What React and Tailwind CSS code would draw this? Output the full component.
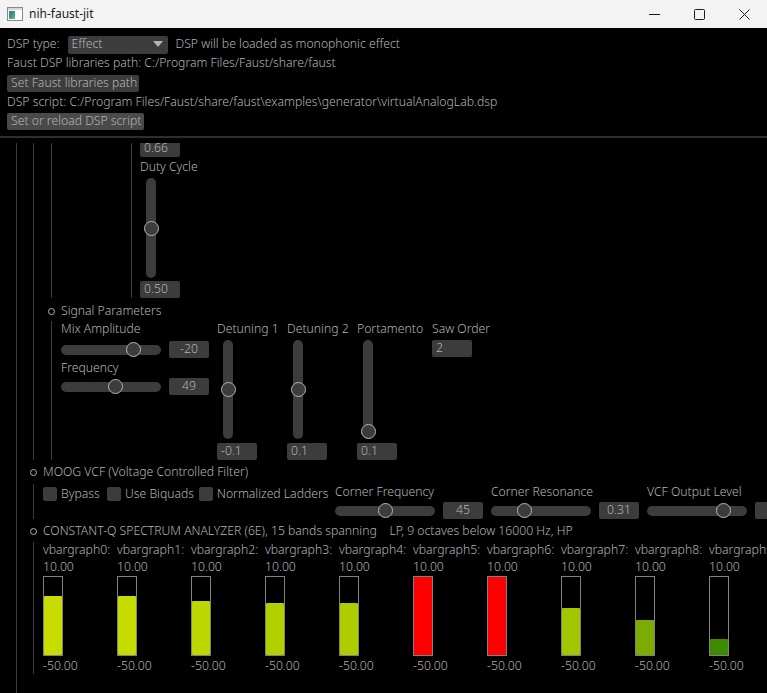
import React from 'react';

const txt = 'text-[#b4b4b4]';

const Bullet = () => (
  <span className="block w-[7px] h-[7px] rounded-full border border-[#b4b4b4] shrink-0" />
);

const ValueBox = ({ value, center = false, w = 'w-[40px]' }) => (
  <div
    className={`${w} h-[17px] rounded-[2px] bg-[#3c3c3c] flex items-center px-[4px] shrink-0 ${center ? 'justify-center' : 'justify-start'}`}
  >
    {value}
  </div>
);

const HSlider = ({ pos }) => (
  <div className="relative w-[100px] h-[17px] flex items-center shrink-0">
    <div className="w-full h-[10px] rounded-full bg-[#3c3c3c]" />
    <div
      className="absolute top-[1px] w-[15px] h-[15px] rounded-full border border-[#b4b4b4] bg-[#3c3c3c]"
      style={{ left: pos - 7.5 }}
    />
  </div>
);

const VSlider = ({ pos, h = 99 }) => (
  <div className="relative w-[15px] flex justify-center shrink-0 ml-[1.5px]" style={{ height: h }}>
    <div className="w-[10px] h-full rounded-full bg-[#3c3c3c]" />
    <div
      className="absolute left-0 w-[15px] h-[15px] rounded-full border border-[#b4b4b4] bg-[#3c3c3c]"
      style={{ top: pos - 7.5 }}
    />
  </div>
);

const Label = ({ children, className = '' }) => (
  <div className={`h-[16px] leading-[16px] whitespace-nowrap ${className}`}>{children}</div>
);

const VGroup = ({ label, pos, value, width }) => (
  <div className="flex flex-col items-start shrink-0" style={{ width }}>
    <Label>{label}</Label>
    <div className="mt-[3px] ml-[2px]">
      <VSlider pos={pos} />
    </div>
    <div className="mt-[4px]">
      <ValueBox value={value} />
    </div>
  </div>
);

const HGroup = ({ label, pos, value }) => (
  <div className="flex flex-col w-[156px] shrink-0">
    <Label>{label}</Label>
    <div className="flex items-center gap-[8px] mt-[2px]">
      <HSlider pos={pos} />
      <ValueBox value={value} center />
    </div>
  </div>
);

const Check = ({ label, width }) => (
  <div className="flex items-center h-[20px] gap-[4px] shrink-0" style={{ width }}>
    <span className="block w-[14px] h-[14px] rounded-[2px] bg-[#3c3c3c]" />
    <span className="whitespace-nowrap">{label}</span>
  </div>
);

const bars = [
  { top: 19, color: '#c8dc00' },
  { top: 19, color: '#c6dc00' },
  { top: 24, color: '#bcd600' },
  { top: 26, color: '#b2d000' },
  { top: 26, color: '#aecc00' },
  { top: 0, color: '#ff0000' },
  { top: 0, color: '#ff0000' },
  { top: 31, color: '#a2c600' },
  { top: 43, color: '#7cac00' },
  { top: 62, color: '#3e8a00' },
];

const Bar = ({ top, color }) => (
  <div className="w-[20px] h-[80px] border border-[#808080] flex flex-col justify-end">
    <div className="w-full rounded-[1px]" style={{ height: 78 - top, background: color }} />
  </div>
);

const Header = ({ children }) => (
  <div className="flex items-center h-[16px]">
    <Bullet />
    <span className="ml-[6px] whitespace-nowrap">{children}</span>
  </div>
);

export default function App() {
  return (
    <div className="w-[767px] h-[693px] overflow-hidden bg-black flex flex-col font-['Noto_Sans',sans-serif] text-[12.2px]">
      {/* title bar */}
      <div className="h-[28px] bg-[#f3f3f3] flex items-center shrink-0">
        <svg width="16" height="14" viewBox="0 0 16 14" className="ml-[7px]">
          <rect x="0.5" y="0.5" width="15" height="13" fill="#fdfdfd" stroke="#8a8a8a" />
          <rect x="1" y="1" width="14" height="2" fill="#d8d8d8" />
          <defs>
            <linearGradient id="g" x1="0" y1="0" x2="1" y2="1">
              <stop offset="0" stopColor="#2f6fb3" />
              <stop offset="0.6" stopColor="#3aa37a" />
              <stop offset="1" stopColor="#8cc152" />
            </linearGradient>
          </defs>
          <rect x="2" y="4" width="6" height="8" fill="url(#g)" />
        </svg>
        <span className="ml-[6px] text-[12px] text-[#1b1b1b]">nih-faust-jit</span>
        <div className="ml-auto flex h-full">
          <div className="w-[45px] h-full flex items-center justify-center">
            <svg width="11" height="11" viewBox="0 0 11 11">
              <line x1="0" y1="5.5" x2="11" y2="5.5" stroke="#1b1b1b" strokeWidth="1" />
            </svg>
          </div>
          <div className="w-[45px] h-full flex items-center justify-center">
            <svg width="11" height="11" viewBox="0 0 11 11">
              <rect x="0.5" y="0.5" width="10" height="10" rx="1" fill="none" stroke="#1b1b1b" strokeWidth="1" />
            </svg>
          </div>
          <div className="w-[45px] h-full flex items-center justify-center">
            <svg width="11" height="11" viewBox="0 0 11 11">
              <path d="M0.5 0.5 L10.5 10.5 M10.5 0.5 L0.5 10.5" stroke="#1b1b1b" strokeWidth="1" />
            </svg>
          </div>
        </div>
      </div>

      {/* top panel */}
      <div className={`flex flex-col pt-[8px] px-[7px] ${txt} font-light`}>
        <div className="flex items-center h-[17px]">
          <span className="whitespace-nowrap">DSP type:</span>
          <div className="ml-[8px] w-[100px] h-[18px] rounded-[2px] bg-[#3c3c3c] flex items-center pl-[4px] pr-[5px]">
            <span>Effect</span>
            <svg width="10" height="7" viewBox="0 0 10 7" className="ml-auto">
              <path d="M0 0 H10 L5 6 Z" fill="#b4b4b4" />
            </svg>
          </div>
          <span className="ml-[8px] whitespace-nowrap">DSP will be loaded as monophonic effect</span>
        </div>
        <Label className="mt-[2px]">Faust DSP libraries path: C:/Program Files/Faust/share/faust</Label>
        <div className="mt-[4px] w-[132px] h-[17px] rounded-[2px] bg-[#3c3c3c] flex items-center px-[4px] whitespace-nowrap">
          Set Faust libraries path
        </div>
        <Label className="mt-[2px]">
          DSP script: C:/Program Files/Faust/share/faust\examples\generator\virtualAnalogLab.dsp
        </Label>
        <div className="mt-[3px] w-[137px] h-[17px] rounded-[2px] bg-[#4a4a4a] flex items-center px-[4px] whitespace-nowrap">
          Set or reload DSP script
        </div>
      </div>
      <div className="mt-[6px] h-[2px] bg-[#2e2e2e] shrink-0" />

      {/* scroll area */}
      <div className={`mt-[5px] flex-1 overflow-hidden ${txt} font-light`}>
        <div className="-mt-[3px] pl-[16px]">
          <div className="border-l border-[#3c3c3c] pl-[13px] pb-[60px]">
            {/* oscillator group */}
            <div className="ml-[3px] border-l border-[#3c3c3c] pl-[14px]">
              <div className="ml-[3px] border-l border-[#3c3c3c] pl-[79px]">
                <div className="border-l border-[#3c3c3c] pl-[8px] flex flex-col items-start">
                  <ValueBox value="0.66" />
                  <Label className="mt-[2px]">Duty Cycle</Label>
                  <div className="mt-[3px] ml-[2px]">
                    <VSlider pos={50} h={100} />
                  </div>
                  <div className="mt-[3px]">
                    <ValueBox value="0.50" />
                  </div>
                </div>
              </div>

              <div className="mt-[5px]">
                <Header>Signal Parameters</Header>
              </div>
              <div className="mt-[2px] ml-[3px] border-l border-[#3c3c3c] pl-[9px] flex items-start">
                <div className="flex flex-col w-[156px] shrink-0">
                  <Label>Mix Amplitude</Label>
                  <div className="flex items-center gap-[8px] mt-[4px]">
                    <HSlider pos={72} />
                    <ValueBox value="-20" center />
                  </div>
                  <Label className="mt-[2px]">Frequency</Label>
                  <div className="flex items-center gap-[8px] mt-[2px]">
                    <HSlider pos={54} />
                    <ValueBox value="49" center />
                  </div>
                </div>
                <VGroup label="Detuning 1" pos={49} value="-0.1" width={70} />
                <VGroup label="Detuning 2" pos={49} value="0.1" width={70} />
                <VGroup label="Portamento" pos={91} value="0.1" width={75} />
                <div className="flex flex-col items-start">
                  <Label>Saw Order</Label>
                  <div className="mt-[3px]">
                    <ValueBox value="2" />
                  </div>
                </div>
              </div>
            </div>

            {/* MOOG VCF */}
            <div className="mt-[4px]">
              <Header>MOOG VCF (Voltage Controlled Filter)</Header>
            </div>
            <div className="mt-[4px] ml-[3px] border-l border-[#3c3c3c] pl-[9px] flex items-start">
              <Check label="Bypass" width={64} />
              <Check label="Use Biquads" width={92} />
              <Check label="Normalized Ladders" width={136} />
              <HGroup label="Corner Frequency" pos={50} value="45" />
              <HGroup label="Corner Resonance" pos={33} value="0.31" />
              <HGroup label="VCF Output Level" pos={76} value="-2" />
            </div>

            {/* spectrum analyzer */}
            <div className="mt-[4px]">
              <Header>
                CONSTANT-Q SPECTRUM ANALYZER (6E), 15 bands spanning&nbsp;&nbsp;&nbsp;&nbsp;LP, 9 octaves below 16000 Hz, HP
              </Header>
            </div>
            <div className="mt-[3px] ml-[3px] border-l border-[#3c3c3c] pl-[9px] flex items-start">
              {bars.map((b, i) => (
                <div key={i} className="w-[74px] shrink-0 flex flex-col items-start">
                  <Label>vbargraph{i}:</Label>
                  <Label className="mt-[1px]">10.00</Label>
                  <div className="mt-[1px]">
                    <Bar top={b.top} color={b.color} />
                  </div>
                  <Label className="mt-[2px]">-50.00</Label>
                </div>
              ))}
            </div>
          </div>
        </div>
      </div>
    </div>
  );
}
